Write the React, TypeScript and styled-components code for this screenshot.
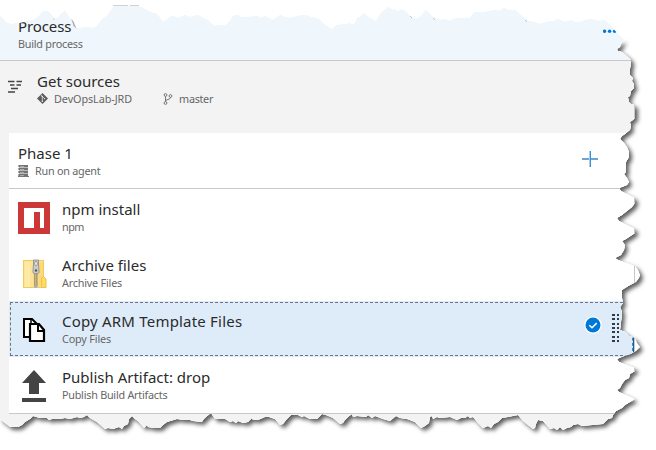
import React from "react";
import styled, { createGlobalStyle, css } from "styled-components";

const GlobalStyle = createGlobalStyle`
  body {
    margin: 0;
    background: #fff;
    font-family: "Noto Sans", "Open Sans", sans-serif;
  }
`;

const topEdge =
  "0,16 3,19 7,23 12,24 20,23 28,21 33,20 38,17 43,11 47,11 50,13 55,19 58,18 61,14 65,11 68,15 70,19 73,23 76,28 80,28 87,27 94,28 97,26 100,22 103,18 107,16 112,9 115,6 125,6 138,6 145,9 150,12 157,14 160,18 163,22 166,20 170,17 173,16 178,18 185,15 190,17 198,15 203,18 208,20 212,24 215,26 218,25 226,25 230,21 233,16 238,15 241,17 248,17 258,16 260,18 265,16 273,20 277,17 280,15 285,17 290,18 297,16 305,15 311,17 316,18 320,20 325,25 332,29 337,25 347,24 349,23 354,25 358,17 360,17 364,13 370,18 376,21 381,13 388,7 393,10 395,9 398,12 401,9 405,11 410,16 416,19 420,17 426,10 433,17 440,20 444,19 450,21 453,19 458,18 470,18 474,12 485,12 495,10 499,11 504,8 509,10 515,10 522,16 528,21 535,22 540,24 550,21 552,22 558,19 565,22 571,20 575,22 580,22 585,20 591,19 600,21 605,20 611,26 618,34 624,40";
const rightEdge =
  "621,44 620,47 617,49 618,51 622,52 628,57 631,60 631,64 630,69 630,75 633,78 632,81 634,84 634,88 631,91 630,96 628,97 629,102 631,104 635,105 635,118 633,120 630,122 631,126 630,130 625,134 622,136 620,139 624,143 627,147 629,152 629,157 626,162 626,172 624,174 627,178 629,182 627,185 622,187 619,188 621,191 635,198 635,203 632,207 627,211 622,215 617,218 619,221 635,229 635,233 629,237 626,239 622,241 625,245 624,250 621,255 615,258 618,260 635,266 638,270 640,275 639,278 636,282 630,285 625,288 622,290 622,298 623,303 620,307 622,312 621,322 620,330 625,332 629,336 635,338 637,343 640,347 636,351 630,354 624,356 617,359 619,362 635,368 635,371 630,374 629,378 625,380 622,384 620,388 617,390 619,392 635,399 630,402 625,405 622,408 616,411 613,415 612,418 608,419 603,424";
const bottomEdge =
  "582,426 578,424 573,425 571,427 567,428 563,430 560,427 557,430 554,428 550,429 543,421 538,420 536,424 535,428 533,429 528,425 523,421 518,415 508,417 502,418 498,422 494,424 491,428 488,426 483,428 478,423 473,417 470,418 468,416 465,418 461,418 457,420 450,417 440,418 437,417 433,419 432,416 430,417 429,423 425,426 421,428 415,422 407,419 400,418 396,416 390,421 383,419 375,416 372,418 368,415 366,417 357,416 353,417 352,414 348,417 345,420 343,423 340,424 333,418 326,415 322,414 317,419 310,419 304,416 302,417 298,415 291,415 287,419 283,424 280,425 275,419 269,417 265,417 258,420 253,420 252,418 248,422 243,423 238,421 236,423 233,421 230,422 225,419 215,419 211,413 206,417 203,420 202,422 193,421 190,420 184,420 177,419 167,422 163,425 160,428 154,428 148,427 147,425 144,428 138,421 135,419 132,416 129,419 128,424 124,426 122,429 119,427 113,429 108,428 105,429 97,422 90,418 87,415 84,417 80,418 77,417 70,419 65,418 60,419 52,419 49,420 47,418 40,418 33,416 30,419 25,422 22,425 18,427 10,427 5,423 0,419";

const toPolygon = (...edges: string[]) =>
  edges
    .join(" ")
    .split(" ")
    .map((pair) => pair.split(",").map((n) => `${n}px`).join(" "))
    .join(", ");

const Stage = styled.div`
  display: grid;
  position: relative;
  width: 656px;
  height: 450px;
  overflow: hidden;

  > * {
    grid-area: 1 / 1;
  }
`;

const Shadow = styled.div`
  display: flex;
  filter: drop-shadow(3px 3px 2px rgba(0, 0, 0, 0.64));
`;

/* Only the right and bottom tears cast a shadow, so the top is kept low. */
const ShadowShape = styled.div`
  flex: 1;
  background: #fff;
  clip-path: polygon(${toPolygon("0,44 612,44 624,40", rightEdge, bottomEdge)});
`;

const Sheet = styled.main`
  display: flex;
  width: 656px;
  height: 450px;
  background: #fff;
  clip-path: polygon(${toPolygon(topEdge, rightEdge, bottomEdge)});
`;

const Pipeline = styled.div`
  box-sizing: border-box;
  display: flex;
  flex-direction: column;
  width: 635px;
  background: #f3f3f3;
  border-right: 1px solid #c8c8c8;
`;

const ProcessHeader = styled.header`
  box-sizing: border-box;
  display: flex;
  justify-content: space-between;
  height: 61px;
  padding: 16px 17px 0 18px;
  background: #eff6fc;
  border-bottom: 1px solid #c8c8c8;
`;

const Sources = styled.section`
  display: flex;
  height: 72px;
  padding: 10px 0 0 8px;
  box-sizing: border-box;
  gap: 14px;

  > svg {
    margin-top: 9px;
  }
`;

const Phase = styled.section`
  display: flex;
  flex-direction: column;
  margin-left: 9px;
  background: #fff;
  border-bottom: 1px solid #c8c8c8;
`;

const PhaseHeader = styled.div`
  box-sizing: border-box;
  display: flex;
  justify-content: space-between;
  height: 56px;
  padding: 10px 36px 0 9px;
  border-bottom: 1px solid #c8c8c8;

  > svg {
    margin-top: 8px;
  }
`;

const Task = styled.div<{ $selected?: boolean }>`
  box-sizing: border-box;
  display: flex;
  align-items: flex-start;
  height: 56px;
  padding: 10px 14px 0 9px;
  gap: 12px;
  ${(p) =>
    p.$selected &&
    css`
      background: #deecf9;
      outline: 1px dashed #6d7780;
      outline-offset: -2px;
      border-right: 1px solid #0067b8;
      padding-right: 13px;
    `}
`;

const IconCell = styled.div`
  display: flex;
  width: 32px;
  height: 32px;
  margin-top: 3px;
`;

const Lines = styled.div`
  display: flex;
  flex-direction: column;
  align-items: flex-start;
`;

const Title = styled.div<{ $spacing?: number }>`
  height: 20px;
  font-size: 15px;
  line-height: 20px;
  letter-spacing: ${(p) => p.$spacing ?? 0}px;
  color: #2b2b2b;
  white-space: nowrap;
`;

const Detail = styled.div<{ $spacing?: number }>`
  display: flex;
  align-items: center;
  height: 15px;
  font-size: 10.8px;
  line-height: 15px;
  letter-spacing: ${(p) => p.$spacing ?? -0.23}px;
  color: #666;
  white-space: nowrap;

  svg {
    margin-right: 6px;
  }
`;

const Branch = styled.span`
  display: flex;
  align-items: center;
  margin-left: 31px;
  letter-spacing: -0.3px;
`;

const RowTools = styled.div`
  display: flex;
  align-items: flex-start;
  gap: 10px;
  margin: 3px 0 0 auto;

  > svg:first-child {
    margin-top: 2px;
  }
`;

const Scraps = styled.svg`
  position: absolute;
  inset: 0;
  pointer-events: none;
`;

const EdgeScraps = () => (
  <Scraps width="656" height="450" viewBox="0 0 656 450">
    <path d="M113 5.500h15M130 5.500h9" stroke="#d2d2d2" />
    <path d="M71 19c2 1 3 3 3.500 5l2 4.500-3-2.500c-.5-2.500-1-4-2.500-7z" fill="#aaa" />
    <path d="M53 19h1.500M525 20l2 2M433 18l2 2M410 16l2 2" stroke="#c4c8cc" />
  </Scraps>
);

const MoreIcon = () => (
  <svg width="14" height="4" viewBox="0 0 14 4">
    {[1.6, 6.6, 11.6].map((x) => (
      <circle key={x} cx={x} cy="2.2" r="1.7" fill="#0078d7" />
    ))}
  </svg>
);

const MoreButton = styled.div`
  display: flex;
  padding-top: 13px;
`;

const StepsIcon = () => (
  <svg width="15" height="13" viewBox="0 0 15 13" fill="none" stroke="#444" strokeWidth="1.300">
    <path d="M0 1.500h6.500M8.500 1.500h5.500M2 5h4.500M8.500 5h4.500M3 8.500h7M0 12h7" />
  </svg>
);

const GitIcon = () => (
  <svg width="11" height="11" viewBox="0 0 11 11">
    <path d="M5.500 0L11 5.500 5.500 11 0 5.500z" fill="#5c5c5c" />
    <path d="M3.800 1.800l1.500 1.500v5.100M5.400 3.500l2 2" fill="none" stroke="#f3f3f3" strokeWidth=".7" />
    <circle cx="5.300" cy="3.400" r=".7" fill="#f3f3f3" />
    <circle cx="5.300" cy="8.200" r=".7" fill="#f3f3f3" />
    <circle cx="7.500" cy="5.600" r=".7" fill="#f3f3f3" />
  </svg>
);

const BranchIcon = () => (
  <svg width="10" height="12" viewBox="0 0 10 12" fill="none" stroke="#777" strokeWidth="1">
    <circle cx="2.500" cy="2" r="1.400" />
    <circle cx="7.500" cy="3" r="1.400" />
    <circle cx="2.500" cy="10" r="1.400" />
    <path d="M2.500 3.500v5M7.500 4.500c0 2.500-5 1.300-5 4" />
  </svg>
);

const ServerIcon = () => (
  <svg width="11" height="12" viewBox="0 0 11 12" shapeRendering="crispEdges">
    {[0, 3, 6, 9].map((y) => (
      <g key={y}>
        <rect x="1" y={y} width="9" height="2" fill="#747474" />
        <rect x="0" y={y} width="1" height="2" fill="#aaa" />
        <rect x="2" y={y + 1} width="4" height="1" fill="#aaa" />
      </g>
    ))}
    <rect x="1" y="2" width="9" height="1" fill="#bbb" />
    <rect x="1" y="5" width="9" height="1" fill="#bbb" />
    <rect x="1" y="8" width="9" height="1" fill="#bbb" />
    <rect x="0" y="11" width="11" height="1" fill="#777" />
  </svg>
);

const PlusIcon = () => (
  <svg width="16" height="17" viewBox="0 0 16 17" shapeRendering="crispEdges">
    <rect x="0" y="7" width="16" height="2" fill="#6ea3d5" />
    <rect x="7" y="0" width="1" height="16" fill="#b9c9e4" />
    <rect x="8" y="0" width="1" height="16" fill="#2f96dc" />
  </svg>
);

const NpmIcon = () => (
  <svg width="32" height="32" viewBox="0 0 32 32" shapeRendering="crispEdges">
    <rect width="32" height="32" fill="#cb3837" />
    <path d="M6 6h20v20h-4V10h-6v16H6z" fill="#fff" />
  </svg>
);

const ZipIcon = () => (
  <svg width="32" height="32" viewBox="0 0 32 32">
    <rect x="5.500" y="2.500" width="20" height="27" fill="#ffe394" stroke="#f2cd55" />
    <path d="M7 4h5v25H7z" fill="#ffe9a8" />
    <path d="M21 4h4v24h-4z" fill="#fbd976" />
    <path d="M23.500 29.500V20l2-1.500 2.500 2.500v8.500z" fill="#ffda68" stroke="#edc343" />
    <rect x="15.500" y="13" width="5" height="17" fill="#e8d391" />
    <path d="M16.800 13.500v15" stroke="#6f6545" strokeWidth="1.500" strokeDasharray="1 1" />
    <path d="M18.800 14.500v14" stroke="#6f6545" strokeWidth="1.500" strokeDasharray="1 1" />
    <path d="M15.500 2h5v4l.6 8.500c-1 1.800-5.200 1.800-6.200 0l.6-8.500z" fill="#c9cbcd" stroke="#85888b" strokeWidth=".8" />
    <rect x="16.700" y="3.500" width="2.600" height="4" rx="1.200" fill="#f7f7f7" stroke="#777" strokeWidth=".7" />
    <circle cx="18" cy="12.500" r="1.200" fill="#565656" />
    <rect x="16.500" y="27.500" width="3" height="2.500" fill="#aeb1b4" />
  </svg>
);

const CopyIcon = () => (
  <svg width="32" height="32" viewBox="0 0 32 32">
    <path d="M6 5h8l5 5v13H6z" fill="#fff" stroke="#000" strokeWidth="2" />
    <path d="M13 4v7h6" fill="none" stroke="#000" strokeWidth="1.500" />
    <path d="M12 10h9l5 6v11H12z" fill="#fff" stroke="#000" strokeWidth="2.200" />
    <path d="M20 10v7h6" fill="none" stroke="#000" strokeWidth="2" />
  </svg>
);

const PublishIcon = () => (
  <svg width="32" height="32" viewBox="0 0 32 32" fill="#444">
    <path d="M16 0l12 13h-7v11H11V13H4z" />
    <rect x="4" y="28" width="24" height="4" />
  </svg>
);

const CheckIcon = () => (
  <svg width="18" height="18" viewBox="0 0 18 18">
    <circle cx="9" cy="9" r="8.700" fill="#fff" />
    <circle cx="9" cy="9" r="7.500" fill="#0078d7" />
    <path d="M5.300 9.200l2.700 2.500 4.700-4.600" fill="none" stroke="#fff" strokeWidth="1.500" />
  </svg>
);

const GripIcon = () => (
  <svg width="8" height="28" viewBox="0 0 8 28" shapeRendering="crispEdges" fill="#333b4a">
    {[0, 4, 9, 13, 17, 22, 26].map((y) => (
      <g key={y}>
        <rect x="0" y={y} width="3" height="2" />
        <rect x="5" y={y} width="2" height="2" />
      </g>
    ))}
  </svg>
);

const tasks = [
  { title: "npm install", titleSpacing: 0, detail: "npm", detailSpacing: -0.5, Icon: NpmIcon },
  { title: "Archive files", titleSpacing: 0, detail: "Archive Files", detailSpacing: -0.2, Icon: ZipIcon },
  {
    title: "Copy ARM Template Files",
    titleSpacing: 0.2,
    detail: "Copy Files",
    detailSpacing: -0.15,
    Icon: CopyIcon,
    selected: true,
  },
  {
    title: "Publish Artifact: drop",
    titleSpacing: 0,
    detail: "Publish Build Artifacts",
    detailSpacing: -0.24,
    Icon: PublishIcon,
  },
];

export default function App() {
  return (
    <>
      <GlobalStyle />
      <Stage>
        <Shadow>
          <ShadowShape />
        </Shadow>
        <Sheet>
          <Pipeline>
            <ProcessHeader>
              <Lines>
                <Title $spacing={-0.1}>Process</Title>
                <Detail>Build process</Detail>
              </Lines>
              <MoreButton>
                <MoreIcon />
              </MoreButton>
            </ProcessHeader>
            <Sources>
              <StepsIcon />
              <Lines>
                <Title>Get sources</Title>
                <Detail $spacing={-0.06}>
                  <GitIcon />
                  DevOpsLab-JRD
                  <Branch>
                    <BranchIcon />
                    master
                  </Branch>
                </Detail>
              </Lines>
            </Sources>
            <Phase>
              <PhaseHeader>
                <Lines>
                  <Title>Phase 1</Title>
                  <Detail>
                    <ServerIcon />
                    Run on agent
                  </Detail>
                </Lines>
                <PlusIcon />
              </PhaseHeader>
              {tasks.map(({ title, titleSpacing, detail, detailSpacing, Icon, selected }) => (
                <Task key={title} $selected={selected}>
                  <IconCell>
                    <Icon />
                  </IconCell>
                  <Lines>
                    <Title $spacing={titleSpacing}>{title}</Title>
                    <Detail $spacing={detailSpacing}>{detail}</Detail>
                  </Lines>
                  {selected && (
                    <RowTools>
                      <CheckIcon />
                      <GripIcon />
                    </RowTools>
                  )}
                </Task>
              ))}
            </Phase>
          </Pipeline>
        </Sheet>
        <EdgeScraps />
      </Stage>
    </>
  );
}
